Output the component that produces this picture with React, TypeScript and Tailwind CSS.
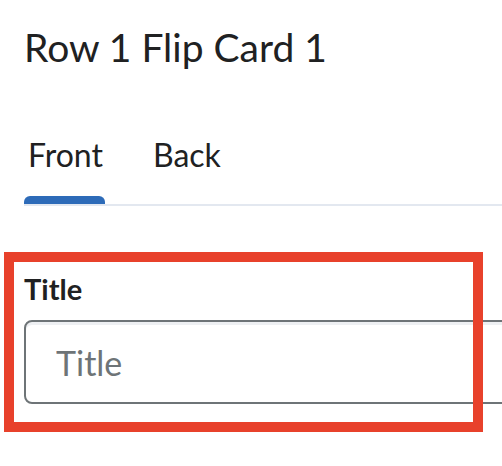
import React from "react";

export default function App() {
  return (
    <div
      className="relative w-[502px] h-[466px] overflow-hidden bg-white text-[#202122]"
      style={{ fontFamily: "Lato, 'Noto Sans', sans-serif" }}
    >
      <div className="pl-[24px] pt-[24px]">
        <h1 className="text-[39px] leading-[47px] font-normal m-0 whitespace-nowrap">Row 1 Flip Card 1</h1>

        <div className="mt-[65px] flex border-b-2 border-[#e3e8f0] w-[700px]">
          <div className="flex flex-col w-[81px]">
            <span className="text-[32px] leading-[38px] pl-[4px] whitespace-nowrap">Front</span>
            <div className="mt-[22px] h-[8px] rounded-t-[6px] bg-[#2d6bb8]" />
          </div>
          <div className="flex flex-col ml-[48px]">
            <span className="text-[32px] leading-[38px] whitespace-nowrap">Back</span>
          </div>
        </div>

        <div className="mt-[66px]">
          <label className="block text-[29px] leading-[34px] font-bold">Title</label>
          <div className="mt-[14px] w-[700px] h-[84px] rounded-[8px] border-2 border-[#6e7477] shadow-[inset_0_3px_0_0_#eef0f3] flex items-center pl-[30px]">
            <input
              className="outline-none bg-transparent text-[34px] placeholder-[#6e7477] text-[#202122] w-full"
              style={{ fontFamily: "Lato, 'Noto Sans', sans-serif" }}
              placeholder="Title"
            />
          </div>
        </div>
      </div>

      <div className="absolute left-[4px] top-[252px] w-[479px] h-[180px] border-[10px] border-[#e8412b] pointer-events-none" />
    </div>
  );
}
